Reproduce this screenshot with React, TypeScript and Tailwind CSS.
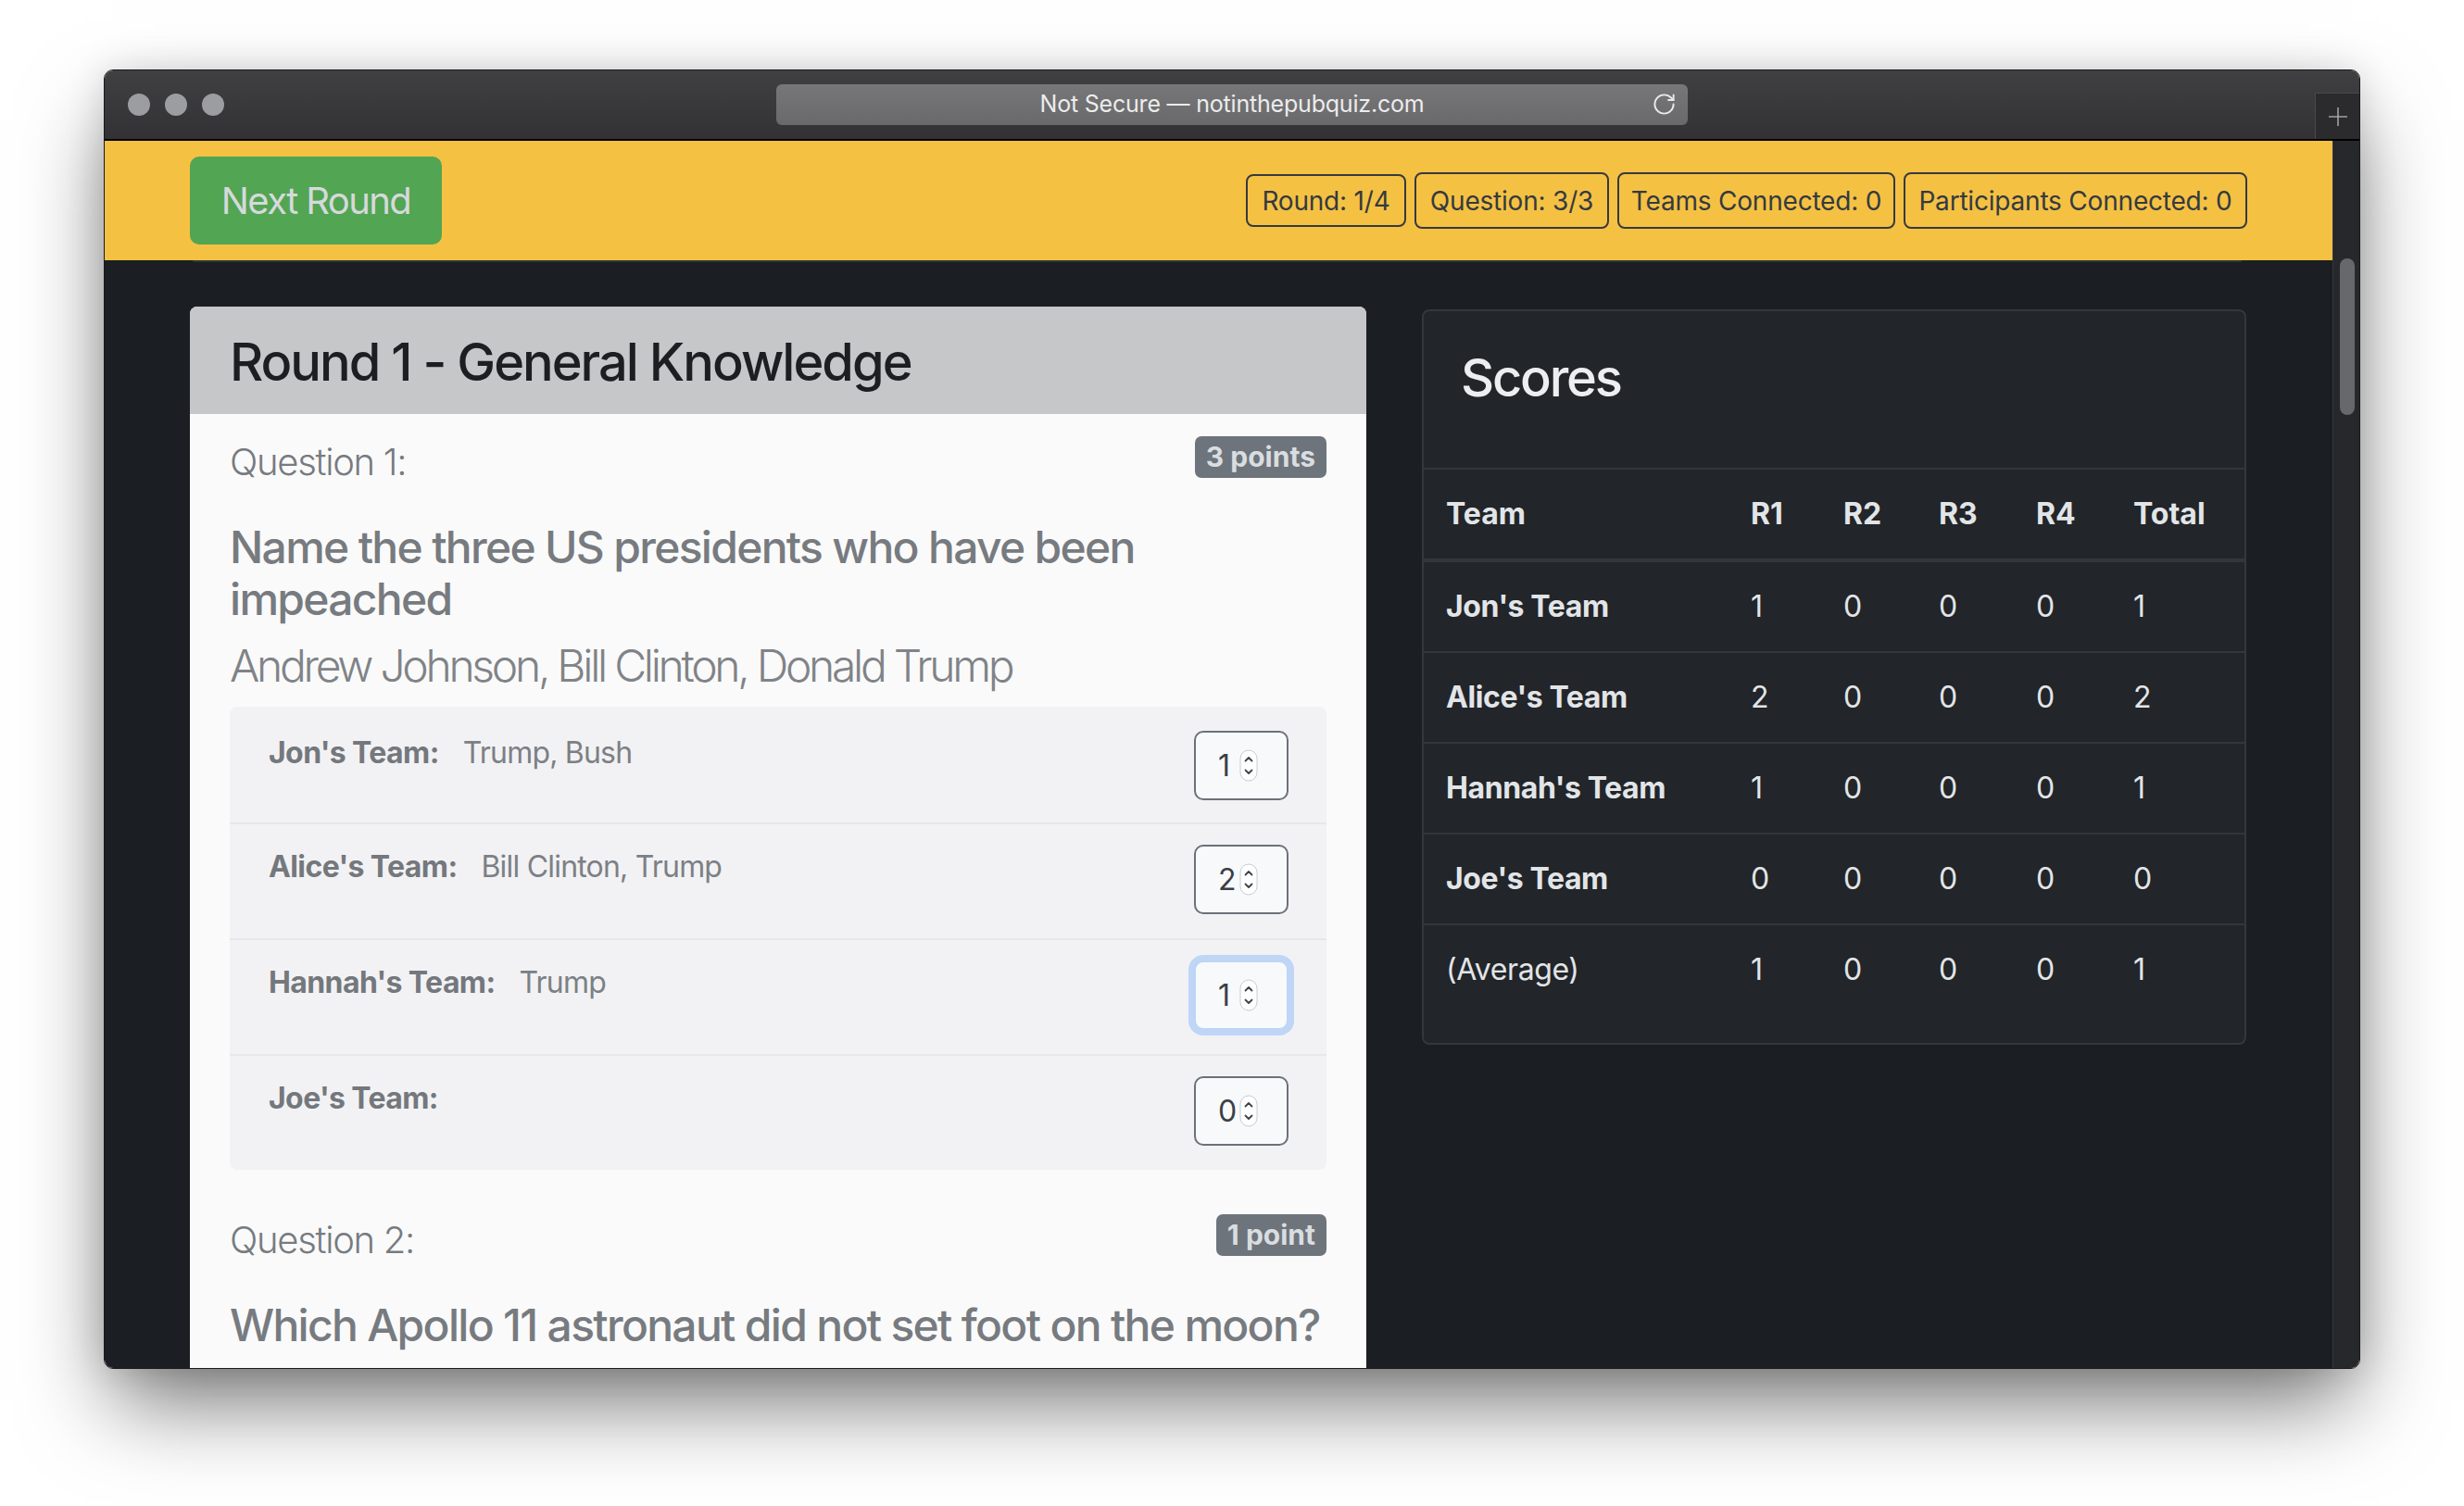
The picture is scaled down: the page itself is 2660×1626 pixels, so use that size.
import { RotateCw } from "lucide-react";

const answers = [
  { team: "Jon's Team:", answer: "Trump, Bush", score: 1 },
  { team: "Alice's Team:", answer: "Bill Clinton, Trump", score: 2 },
  { team: "Hannah's Team:", answer: "Trump", score: 1, focused: true },
  { team: "Joe's Team:", answer: "", score: 0 },
];

const scores = [
  { team: "Jon's Team", r: [1, 0, 0, 0], total: 1 },
  { team: "Alice's Team", r: [2, 0, 0, 0], total: 2 },
  { team: "Hannah's Team", r: [1, 0, 0, 0], total: 1 },
  { team: "Joe's Team", r: [0, 0, 0, 0], total: 0 },
  { team: "(Average)", r: [1, 0, 0, 0], total: 1, plain: true },
];

const cols = "grid grid-cols-[329px_100px_103px_105px_105px_1fr] items-center";

const Spinner = () => (
  <svg width="20" height="35" viewBox="0 0 20 35">
    <rect x="1" y="1" width="18" height="33" rx="9" fill="#fff" stroke="#c9ccd0" />
    <path d="M6.5 12.5 L10 9 L13.5 12.5" fill="none" stroke="#3f4348" strokeWidth="1.8" strokeLinecap="round" strokeLinejoin="round" />
    <path d="M6.5 22.5 L10 26 L13.5 22.5" fill="none" stroke="#3f4348" strokeWidth="1.8" strokeLinecap="round" strokeLinejoin="round" />
  </svg>
);

const ScoreInput = ({ value, focused }: { value: number; focused?: boolean }) => (
  <div
    className={
      focused
        ? "w-[102px] h-[75px] rounded-[10px] border-2 border-[#bed5f5] bg-[#f8f9fa] shadow-[0_0_0_6px_#bfd6f6] flex items-center justify-between pl-[24px] pr-[31px]"
        : "w-[102px] h-[75px] rounded-[10px] border-2 border-[#6b7178] bg-[#f8f9fa] flex items-center justify-between pl-[24px] pr-[31px]"
    }
  >
    <span className="text-[32px] leading-none text-[#3a4047]">{value}</span>
    <Spinner />
  </div>
);

const Badge = ({ children, w, h }: { children: string; w: string; h: string }) => (
  <div className={`${w} ${h} border-2 border-[#343a40] rounded-[8px] flex items-center justify-center text-[28px] text-[#343a40] tracking-[-0.2px]`}>
    {children}
  </div>
);

export default function App() {
  return (
    <div className="w-[2660px] h-[1626px] bg-white pt-[75px] pl-[112px] overflow-hidden font-['Inter','Liberation_Sans',sans-serif]">
      {/* browser window */}
      <div className="w-[2436px] h-[1403px] flex flex-col overflow-hidden rounded-[10px] border border-[#1a1a1b] shadow-[0_45px_90px_-10px_rgba(0,0,0,0.55),0_0_40px_rgba(0,0,0,0.12)]">
        {/* title bar */}
        <div className="h-[76px] shrink-0 grid grid-cols-[1fr_auto_1fr] bg-gradient-to-b from-[#404043] to-[#323235] border-b-2 border-black">
          <div className="flex items-center gap-[16px] pl-[25px]">
            <div className="w-[24px] h-[24px] rounded-full bg-[#9c9da1]" />
            <div className="w-[24px] h-[24px] rounded-full bg-[#9c9da1]" />
            <div className="w-[24px] h-[24px] rounded-full bg-[#9c9da1]" />
          </div>
          <div className="flex items-center">
            <div className="w-[984px] h-[44px] rounded-[6px] bg-gradient-to-b from-[#777779] to-[#69696b] flex items-center relative">
              <div className="flex-1 text-center text-[25px] text-[#ececec] tracking-[-0.2px]">
                Not Secure — notinthepubquiz.com
              </div>
              <RotateCw className="absolute right-[12px] top-[8px] text-[#e8e8e8]" size={27} strokeWidth={1.7} />
            </div>
          </div>
          <div className="flex justify-end items-end">
            <div className="w-[48px] h-[50px] bg-[#2b2b2d] border-l border-t border-[#4a4a4d] flex items-center justify-center">
              <svg width="22" height="22" viewBox="0 0 22 22">
                <path d="M11 1 V21 M1 11 H21" stroke="#a3a3a6" strokeWidth="1.6" />
              </svg>
            </div>
          </div>
        </div>

        <div className="flex-1 flex overflow-hidden">
          {/* page */}
          <div className="flex-1 bg-[#1b1e22] overflow-hidden">
            {/* navbar */}
            <div className="h-[129px] bg-[#f5c143] px-[92px] flex items-center justify-between">
              <div className="w-[272px] h-[95px] rounded-[10px] bg-[#52a552] flex items-center justify-center text-[40px] text-[#d6d9dc] tracking-[-1.6px]">
                Next Round
              </div>
              <div className="flex items-center gap-[9px]">
                <Badge w="w-[173px]" h="h-[57px]">Round: 1/4</Badge>
                <Badge w="w-[210px]" h="h-[61px]">Question: 3/3</Badge>
                <Badge w="w-[300px]" h="h-[61px]">Teams Connected: 0</Badge>
                <Badge w="w-[371px]" h="h-[61px]">Participants Connected: 0</Badge>
              </div>
            </div>
            <div className="h-[2px] ml-[95px] mr-[98px] rounded-full bg-[#303338]" />

            {/* content */}
            <div className="px-[92px] pt-[48px] flex items-start gap-[60px]">
              {/* round card */}
              <div className="w-[1270px] shrink-0 rounded-[8px] overflow-hidden bg-[#fafafa]">
                <div className="h-[116px] bg-[#c6c7c9] flex items-center pl-[43px] pt-[4px]">
                  <h3 className="text-[56px] font-medium text-[#1c1e21] tracking-[-2px]">Round 1 - General Knowledge</h3>
                </div>
                <div className="px-[43px] pt-[24px] pb-[40px] text-[#777b80]">
                  <div className="flex justify-between items-start">
                    <div className="mt-[4px] text-[40px] leading-[48px] font-light tracking-[-1.3px]">Question 1:</div>
                    <div className="h-[45px] px-[12px] rounded-[7px] bg-[#6d747b] text-[#dadde0] text-[30px] font-bold flex items-center">3 points</div>
                  </div>
                  <div className="mt-[40px] text-[48px] leading-[56px] font-medium tracking-[-1.7px]">
                    Name the three US presidents who have been impeached
                  </div>
                  <div className="mt-[15px] text-[48px] leading-[58px] font-light text-[#808387] tracking-[-3.3px] whitespace-nowrap">
                    Andrew Johnson, Bill Clinton, Donald Trump
                  </div>
                  <div className="mt-[15px] rounded-[8px] bg-[#f2f2f4] flex flex-col">
                    {answers.map((a, i) => (
                      <div
                        key={a.team}
                        className={`h-[125px] pl-[42px] pr-[41px] flex justify-between items-start ${i === 0 ? "pt-[26px]" : "pt-[22px] border-t-2 border-[#e7e7ea]"}`}
                      >
                        <div className="text-[32px] leading-[48px] flex">
                          <span className="font-bold text-[#74787d] tracking-[-0.6px]">{a.team}</span>
                          {a.answer && <span className="ml-[26px] text-[#7c8085] tracking-[-0.8px]">{a.answer}</span>}
                        </div>
                        <ScoreInput value={a.score} focused={a.focused} />
                      </div>
                    ))}
                  </div>
                  <div className="mt-[48px] flex justify-between items-start">
                    <div className="mt-[4px] text-[40px] leading-[48px] font-light tracking-[-1.3px]">Question 2:</div>
                    <div className="h-[45px] px-[12px] rounded-[7px] bg-[#6d747b] text-[#dadde0] text-[30px] font-bold flex items-center">1 point</div>
                  </div>
                  <div className="mt-[40px] text-[48px] leading-[56px] font-medium tracking-[-1.7px] whitespace-nowrap">
                    Which Apollo 11 astronaut did not set foot on the moon?
                  </div>
                </div>
              </div>

              {/* scores card */}
              <div className="w-[890px] shrink-0 mt-[3px] rounded-[8px] border-2 border-[#34383d] bg-[#222529] text-[#e2e5e8]">
                <div className="h-[169px] pl-[40px] pt-[39px]">
                  <h3 className="text-[56px] leading-[67px] font-medium text-[#eceef0] tracking-[-2.2px]">Scores</h3>
                </div>
                <div className="text-[32px]">
                  <div className={`${cols} h-[98px] border-t-2 border-[#33373c] font-bold`}>
                    <div className="pl-[24px]">Team</div>
                    <div className="pl-[24px]">R1</div>
                    <div className="pl-[24px]">R2</div>
                    <div className="pl-[24px]">R3</div>
                    <div className="pl-[24px]">R4</div>
                    <div className="pl-[24px]">Total</div>
                  </div>
                  {scores.map((s, i) => (
                    <div key={s.team} className={`${cols} ${i === 0 ? "h-[100px] border-t-4" : "h-[98px] border-t-2"} border-[#33373c]`}>
                      <div className={`pl-[24px] tracking-[-0.4px] ${s.plain ? "" : "font-bold"}`}>{s.team}</div>
                      {s.r.map((v, j) => (
                        <div key={j} className="pl-[24px]">{v}</div>
                      ))}
                      <div className="pl-[24px]">{s.total}</div>
                    </div>
                  ))}
                  <div className="h-[31px]" />
                </div>
              </div>
            </div>
          </div>

          {/* scrollbar */}
          <div className="w-[29px] shrink-0 bg-[#26282c] border-l border-[#35373b] pl-[7px] pt-[127px]">
            <div className="w-[16px] h-[169px] rounded-full bg-[#67686c]" />
          </div>
        </div>
      </div>
    </div>
  );
}
